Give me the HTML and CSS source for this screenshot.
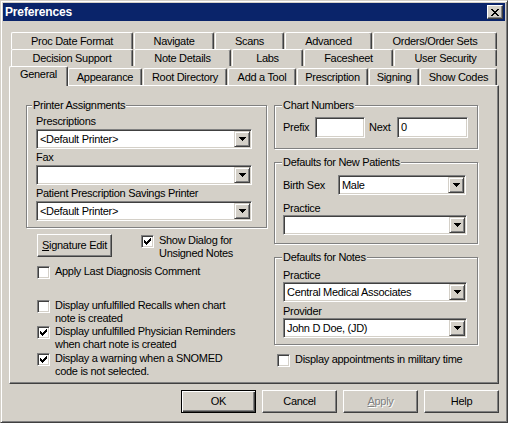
FILE: index.html
```html
<!DOCTYPE html>
<html>
<head>
<meta charset="utf-8">
<title>Preferences</title>
<link rel="stylesheet" href="styles.css">
</head>
<body>
<div class="window">
  <div class="titlebar">
    <span class="title">Preferences</span>
    <div class="close"><svg width="8" height="7" viewBox="0 0 8 7"><path d="M0 0h2v1H0zM6 0h2v1H6zM1 1h2v1H1zM5 1h2v1H5zM2 2h4v1H2zM3 3h2v1H3zM2 4h4v1H2zM1 5h2v1H1zM5 5h2v1H5zM0 6h2v1H0zM6 6h2v1H6z" fill="#000"/></svg></div>
  </div>
  <div class="main">
    <div class="tabstrip">
      <div class="tabrow">
        <div class="tab w122">Proc Date Format</div>
        <div class="tab w80">Navigate</div>
        <div class="tab w69">Scans</div>
        <div class="tab w87">Advanced</div>
        <div class="tab w124">Orders/Order Sets</div>
      </div>
      <div class="tabrow">
        <div class="tab w122">Decision Support</div>
        <div class="tab w97">Note Details</div>
        <div class="tab w71">Labs</div>
        <div class="tab w89">Facesheet</div>
        <div class="tab w103">User Security</div>
      </div>
      <div class="tabrow front">
        <div class="tab sel w59">General</div>
        <div class="tab w74">Appearance</div>
        <div class="tab w84">Root Directory</div>
        <div class="tab w68">Add a Tool</div>
        <div class="tab w71">Prescription</div>
        <div class="tab w50">Signing</div>
        <div class="tab w77">Show Codes</div>
      </div>
    </div>
    <div class="panel">
      <div class="col col-left">
        <fieldset class="group">
          <legend>Printer Assignments</legend>
          <div class="gbody printers">
            <div class="flabel">Prescriptions</div>
            <div class="combo cw216"><span class="cval">&lt;Default Printer&gt;</span><span class="cbtn"><svg width="7" height="4" viewBox="0 0 7 4"><path d="M0 0h7v1h-1v1h-1v1h-1v1h-1v-1h-1v-1h-1v-1H0z" fill="#000"/></svg></span></div>
            <div class="flabel">Fax</div>
            <div class="combo cw216"><span class="cval"></span><span class="cbtn"><svg width="7" height="4" viewBox="0 0 7 4"><path d="M0 0h7v1h-1v1h-1v1h-1v1h-1v-1h-1v-1h-1v-1H0z" fill="#000"/></svg></span></div>
            <div class="flabel">Patient Prescription Savings Printer</div>
            <div class="combo cw216"><span class="cval">&lt;Default Printer&gt;</span><span class="cbtn"><svg width="7" height="4" viewBox="0 0 7 4"><path d="M0 0h7v1h-1v1h-1v1h-1v1h-1v-1h-1v-1h-1v-1H0z" fill="#000"/></svg></span></div>
          </div>
        </fieldset>
        <div class="sigrow">
          <div class="btn"><span><u>S</u>ignature Edit</span></div>
          <div class="opt dialog-opt">
            <span class="chk"><svg width="7" height="7" viewBox="0 0 7 7"><path d="M0 2h1v3H0zM1 3h1v3H1zM2 4h1v3H2zM3 3h1v3H3zM4 2h1v3H4zM5 1h1v3H5zM6 0h1v3H6z" fill="#000"/></svg></span>
            <span class="otext">Show Dialog for<br>Unsigned Notes</span>
          </div>
        </div>
        <div class="opt lopt o-apply">
          <span class="chk"></span>
          <span class="otext">Apply Last Diagnosis Comment</span>
        </div>
        <div class="opt lopt o-recalls">
          <span class="chk"></span>
          <span class="otext">Display unfulfilled Recalls when chart<br>note is created</span>
        </div>
        <div class="opt lopt o-phys">
          <span class="chk"><svg width="7" height="7" viewBox="0 0 7 7"><path d="M0 2h1v3H0zM1 3h1v3H1zM2 4h1v3H2zM3 3h1v3H3zM4 2h1v3H4zM5 1h1v3H5zM6 0h1v3H6z" fill="#000"/></svg></span>
          <span class="otext">Display unfulfilled Physician Reminders<br>when chart note is created</span>
        </div>
        <div class="opt lopt o-snomed">
          <span class="chk"><svg width="7" height="7" viewBox="0 0 7 7"><path d="M0 2h1v3H0zM1 3h1v3H1zM2 4h1v3H2zM3 3h1v3H3zM4 2h1v3H4zM5 1h1v3H5zM6 0h1v3H6z" fill="#000"/></svg></span>
          <span class="otext">Display a warning when a SNOMED<br>code is not selected.</span>
        </div>
      </div>
      <div class="col col-right">
        <fieldset class="group">
          <legend>Chart Numbers</legend>
          <div class="gbody chart">
            <span class="lbl-prefix">Prefix</span>
            <div class="tinput iw50"></div>
            <span class="lbl-next">Next</span>
            <div class="tinput iw71">0</div>
          </div>
        </fieldset>
        <fieldset class="group">
          <legend>Defaults for New Patients</legend>
          <div class="gbody newpat">
            <div class="birthrow">
              <span class="lbl-birth">Birth Sex</span>
              <div class="combo cw128"><span class="cval">Male</span><span class="cbtn"><svg width="7" height="4" viewBox="0 0 7 4"><path d="M0 0h7v1h-1v1h-1v1h-1v1h-1v-1h-1v-1h-1v-1H0z" fill="#000"/></svg></span></div>
            </div>
            <div class="flabel np-practice">Practice</div>
            <div class="combo cw184"><span class="cval"></span><span class="cbtn"><svg width="7" height="4" viewBox="0 0 7 4"><path d="M0 0h7v1h-1v1h-1v1h-1v1h-1v-1h-1v-1h-1v-1H0z" fill="#000"/></svg></span></div>
          </div>
        </fieldset>
        <fieldset class="group">
          <legend>Defaults for Notes</legend>
          <div class="gbody notes">
            <div class="flabel">Practice</div>
            <div class="combo cw184"><span class="cval">Central Medical Associates</span><span class="cbtn"><svg width="7" height="4" viewBox="0 0 7 4"><path d="M0 0h7v1h-1v1h-1v1h-1v1h-1v-1h-1v-1h-1v-1H0z" fill="#000"/></svg></span></div>
            <div class="flabel provider">Provider</div>
            <div class="combo cw184"><span class="cval">John D Doe, (JD)</span><span class="cbtn"><svg width="7" height="4" viewBox="0 0 7 4"><path d="M0 0h7v1h-1v1h-1v1h-1v1h-1v-1h-1v-1h-1v-1H0z" fill="#000"/></svg></span></div>
          </div>
        </fieldset>
        <div class="opt o-military">
          <span class="chk"></span>
          <span class="otext">Display appointments in military time</span>
        </div>
      </div>
    </div>
    <div class="buttons">
      <div class="btn default">OK</div>
      <div class="btn">Cancel</div>
      <div class="btn disabled"><span><u>A</u>pply</span></div>
      <div class="btn">Help</div>
    </div>
  </div>
</div>
</body>
</html>
```

FILE: styles.css
```css
html, body {
  margin: 0;
  padding: 0;
}
body {
  font-family: "Liberation Sans", Arial, sans-serif;
  font-size: 11px;
  letter-spacing: -0.3px;
  color: #000;
  background: #d4d0c8;
}
.window {
  box-sizing: border-box;
  width: 508px;
  height: 423px;
  background: #d4d0c8;
  border: 1px solid;
  border-color: #d4d0c8 #404040 #404040 #d4d0c8;
  box-shadow: inset 1px 1px #fff, inset -1px -1px #808080;
  padding: 2px;
}
.titlebar {
  height: 18px;
  background: #0a246a;
  display: flex;
  align-items: center;
  justify-content: space-between;
}
.title {
  color: #fff;
  font-weight: bold;
  font-size: 12px;
  letter-spacing: -0.15px;
  padding-left: 2px;
  line-height: 18px;
}
.close {
  box-sizing: border-box;
  width: 16px;
  height: 14px;
  margin-right: 2px;
  background: #d4d0c8;
  border: 1px solid;
  border-color: #fff #404040 #404040 #fff;
  box-shadow: inset -1px -1px #808080;
  display: flex;
  align-items: center;
  justify-content: center;
}
.close svg { display: block; }
.main {
  padding: 11px 6px 0 6px;
}
.tabstrip {
  padding-left: 2px;
}
.tabrow {
  display: flex;
  height: 17px;
}
.tabrow.front {
  height: 19px;
  align-items: flex-end;
}
.tab {
  box-sizing: border-box;
  flex: none;
  height: 17px;
  margin-right: 1px;
  border-top: 1px solid #fff;
  border-left: 1px solid #fff;
  border-right: 1px solid #404040;
  border-radius: 2px 2px 0 0;
  box-shadow: inset -1px 0 #808080;
  text-align: center;
  padding-top: 2px;
  line-height: 13px;
  white-space: nowrap;
  background: #d4d0c8;
}
.tab:last-child { margin-right: 0; }
.tab.sel {
  height: 20px;
  margin-left: -2px;
  margin-right: 0;
  margin-bottom: -1px;
  padding-top: 1px;
  position: relative;
  z-index: 1;
}
.w50 { width: 50px; }
.w59 { width: 59px; }
.w68 { width: 68px; }
.w69 { width: 69px; }
.w71 { width: 71px; }
.w74 { width: 74px; }
.w77 { width: 77px; }
.w80 { width: 80px; }
.w84 { width: 84px; }
.w87 { width: 87px; }
.w89 { width: 89px; }
.w97 { width: 97px; }
.w103 { width: 103px; }
.w122 { width: 122px; }
.w124 { width: 124px; }

.panel {
  box-sizing: border-box;
  width: 490px;
  height: 299px;
  border: 1px solid;
  border-color: #fff #404040 #404040 #fff;
  box-shadow: inset -1px -1px #808080;
  display: flex;
  gap: 7px;
  padding: 13px 0 0 16px;
}
.col { flex: none; }
.col-left { width: 241px; }
.col-right { width: 204px; }

.group {
  margin: 0;
  padding: 0;
  min-width: 0;
  border: 1px solid #808080;
  box-shadow: 1px 1px 0 #fff, inset 1px 1px 0 #fff;
}
.group legend {
  padding: 0 1px;
  margin-left: 5px;
  line-height: 13px;
  background: #d4d0c8;
}
.col-right .group legend { margin-left: 7px; }
.col-right .group + .group { margin-top: 7px; }

.flabel {
  line-height: 13px;
  white-space: nowrap;
}
.printers {
  padding: 3px 0 6px 9px;
}
.printers .flabel { margin-bottom: 1px; }
.printers .combo { margin-bottom: 2px; }
.printers .combo:last-child { margin-bottom: 0; }

.combo {
  box-sizing: border-box;
  display: flex;
  height: 20px;
  padding: 1px;
  border: 1px solid;
  border-color: #808080 #fff #fff #808080;
  box-shadow: inset 1px 1px #404040, inset -1px -1px #d4d0c8;
  background: #fff;
}
.cw216 { width: 216px; }
.cw184 { width: 184px; }
.cw128 { width: 128px; }
.cval {
  flex: 1;
  min-width: 0;
  line-height: 16px;
  padding-left: 2px;
  white-space: nowrap;
  overflow: hidden;
}
.cbtn {
  box-sizing: border-box;
  flex: none;
  width: 16px;
  height: 16px;
  background: #d4d0c8;
  border: 1px solid;
  border-color: #d4d0c8 #404040 #404040 #d4d0c8;
  box-shadow: inset 1px 1px #fff, inset -1px -1px #808080;
  display: flex;
  align-items: center;
  justify-content: center;
}
.cbtn svg { display: block; }

.tinput {
  box-sizing: border-box;
  height: 21px;
  padding: 1px 2px;
  border: 1px solid;
  border-color: #808080 #fff #fff #808080;
  box-shadow: inset 1px 1px #404040, inset -1px -1px #d4d0c8;
  background: #fff;
  line-height: 16px;
  padding-left: 3px;
}
.iw50 { width: 50px; }
.iw71 { width: 71px; }

.chart {
  display: flex;
  align-items: center;
  padding: 5px 0 10px 8px;
  line-height: 13px;
}
.lbl-prefix { width: 32px; flex: none; }
.lbl-next { width: 28px; padding-left: 4px; flex: none; }

.newpat { padding: 6px 0 8px 8px; }
.birthrow {
  display: flex;
  align-items: center;
  line-height: 13px;
}
.lbl-birth { width: 55px; flex: none; }
.np-practice { margin-top: 7px; }

.notes { padding: 5px 0 6px 8px; }
.notes .provider { margin-top: 3px; }

.btn {
  box-sizing: border-box;
  flex: none;
  width: 75px;
  height: 23px;
  border: 1px solid;
  border-color: #fff #404040 #404040 #fff;
  box-shadow: inset -1px -1px #808080;
  display: flex;
  align-items: center;
  justify-content: center;
  line-height: 13px;
  white-space: nowrap;
}
.btn.default {
  border-color: #000;
  box-shadow: inset 1px 1px #fff, inset -1px -1px #404040, inset -2px -2px #808080;
}
.btn.disabled {
  color: #808080;
  text-shadow: 1px 1px 0 #fff;
}

.chk {
  box-sizing: border-box;
  flex: none;
  width: 13px;
  height: 13px;
  margin-top: 1px;
  margin-right: 5px;
  padding: 2px;
  border: 1px solid;
  border-color: #808080 #fff #fff #808080;
  box-shadow: inset 1px 1px #404040, inset -1px -1px #d4d0c8;
  background: #fff;
}
.chk svg { display: block; }
.opt {
  display: flex;
  align-items: flex-start;
  line-height: 13px;
  white-space: nowrap;
}
.sigrow {
  display: flex;
  margin-top: 6px;
  padding-left: 11px;
}
.dialog-opt { margin-left: 29px; }
.lopt { padding-left: 11px; }
.o-apply { margin-top: 5px; }
.o-recalls { margin-top: 20px; }
.o-snomed { margin-top: 1px; }
.o-military {
  margin-top: 8px;
  padding-left: 3px;
}

.buttons {
  display: flex;
  justify-content: flex-end;
  gap: 6px;
  margin-top: 6px;
}
```
